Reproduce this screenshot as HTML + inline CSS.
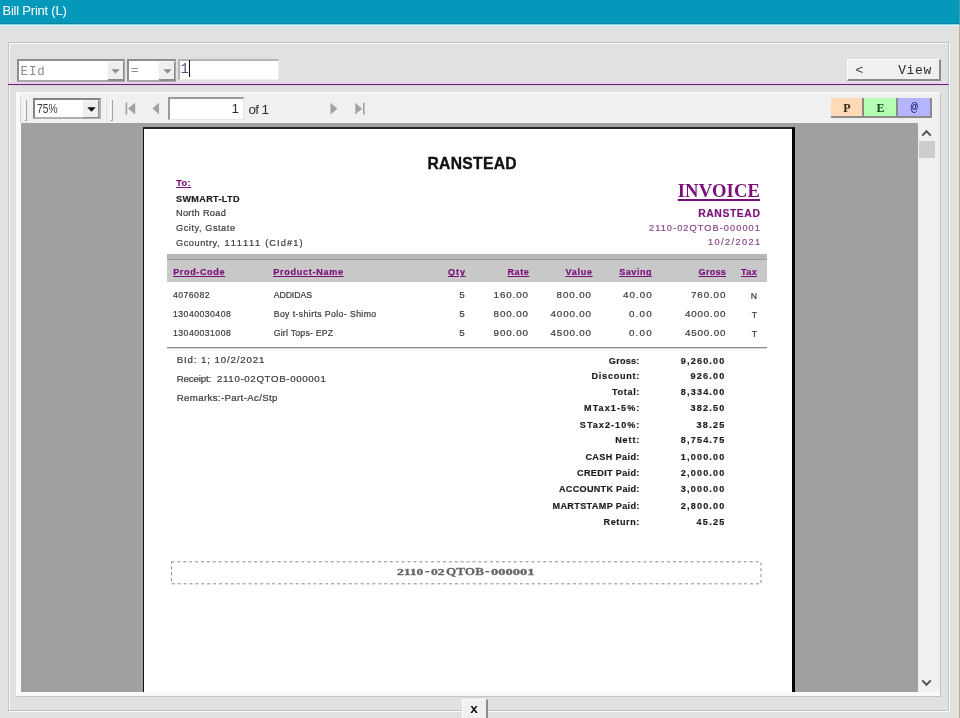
<!DOCTYPE html>
<html>
<head>
<meta charset="utf-8">
<title>Bill Print (L)</title>
<style>
html,body{margin:0;padding:0;}
body{width:960px;height:718px;overflow:hidden;position:relative;background:#e1e1e1;font-family:"Liberation Sans",sans-serif;}
div,span,svg{position:absolute;box-sizing:border-box;}
.t{white-space:pre;line-height:1;}
.title{font-family:"Liberation Sans", sans-serif;font-size:13px;font-weight:normal;color:#ffffff;}
.h1{font-family:"Liberation Sans", sans-serif;font-size:15.7px;font-weight:bold;color:#111;-webkit-text-stroke:0.35px currentColor;}
.to{font-family:"Liberation Sans", sans-serif;font-size:9.2px;font-weight:bold;color:#7a0f7a;text-decoration:underline;text-decoration-thickness:1px;text-underline-offset:1px;-webkit-text-stroke:0.18px currentColor;}
.b{font-family:"Liberation Sans", sans-serif;font-size:9.1px;font-weight:bold;color:#1c1c1c;-webkit-text-stroke:0.18px currentColor;}
.n{font-family:"Liberation Sans", sans-serif;font-size:9.2px;font-weight:normal;color:#3c3c3c;-webkit-text-stroke:0.22px currentColor;}
.rt{font-family:"Liberation Sans", sans-serif;font-size:8.7px;font-weight:normal;color:#3c3c3c;-webkit-text-stroke:0.22px currentColor;}
.rn{font-family:"Liberation Sans", sans-serif;font-size:9.8px;font-weight:normal;color:#3c3c3c;-webkit-text-stroke:0.22px currentColor;}
.inf{font-family:"Liberation Sans", sans-serif;font-size:9.7px;font-weight:normal;color:#3c3c3c;-webkit-text-stroke:0.22px currentColor;}
.inv{font-family:"Liberation Serif", serif;font-size:18.6px;font-weight:bold;color:#7a0f7a;text-decoration:underline;text-decoration-thickness:1.6px;text-underline-offset:2.2px;}
.pb{font-family:"Liberation Sans", sans-serif;font-size:10.4px;font-weight:bold;color:#7a0f7a;-webkit-text-stroke:0.18px currentColor;}
.pn{font-family:"Liberation Sans", sans-serif;font-size:9.2px;font-weight:normal;color:#8c4a8c;-webkit-text-stroke:0.22px currentColor;}
.hd{font-family:"Liberation Sans", sans-serif;font-size:9.1px;font-weight:bold;color:#7a0f7a;text-decoration:underline;text-decoration-thickness:1px;text-underline-offset:1px;-webkit-text-stroke:0.18px currentColor;}
.geo{font-family:"Liberation Serif", serif;font-size:11.5px;font-weight:bold;color:#666;-webkit-text-stroke:0.3px currentColor;}
.mono{font-family:"Liberation Mono",monospace;white-space:pre;line-height:1;}
/* title */
#tb{left:0;top:0;width:960px;height:23px;background:#0499bb;}
#tb1{left:0;top:23px;width:960px;height:1px;background:#0c819d;}
#tb2{left:0;top:24px;width:960px;height:1px;background:#86d3df;}
#tb3{left:0;top:25px;width:960px;height:1px;background:#ccfdff;}
#rstrip{left:958px;top:26px;width:1px;height:692px;background:#ede3db;}
#rstrip2{left:959px;top:0;width:1px;height:718px;background:#b9ab9e;}
#rstrip3{left:959px;top:0;width:1px;height:24px;background:#3f9fb2;}
/* group box */
#gb{left:8px;top:42px;width:941px;height:669px;border:1px solid #c2c2c2;box-shadow:1px 1px 0 #fbfbfb, inset 1px 1px 0 #fbfbfb;}
/* combos */
.cb{background:#fff;border:2px solid #8e8e8e;border-right-color:#a8a8a8;border-bottom-color:#a8a8a8;}
.cbtn{background:#efefef;border-right:1px solid #8a8a8a;border-bottom:2px solid #8a8a8a;border-left:1px solid #fafafa;border-top:1px solid #fafafa;}
#plm{left:9px;top:82px;width:939px;height:1px;background:#e9dbe9;}
#pl0{left:8px;top:83px;width:941px;height:1px;background:#efc9ef;}
#pl1{left:8px;top:84px;width:941px;height:1px;background:#5b2f63;}
#pl2{left:8px;top:85px;width:941px;height:1px;background:#eaccea;}
#pl3{left:9px;top:86px;width:939px;height:1px;background:#e5dde5;}
/* raised button */
.btn{background:#f0f0f0;border-top:1px solid #fdfdfd;border-left:1px solid #fdfdfd;border-right:2px solid #8c8c8c;border-bottom:2px solid #8c8c8c;}
/* viewer */
#vp{left:16px;top:92px;width:925px;height:605px;background:#f0f0f0;border-top:1px solid #fafafa;border-left:1px solid #fafafa;border-right:1px solid #c4c4c4;border-bottom:1px solid #c4c4c4;}
#ga{left:21px;top:123px;width:897px;height:569px;background:#a0a0a0;overflow:hidden;}
#page{left:122px;top:4px;width:652px;height:800px;background:#fff;border:1px solid #111;border-right:3px solid #000;border-top:2px solid #222;}
#sb{left:918px;top:123px;width:22px;height:569px;background:#f0f0f0;}
#th{left:919px;top:141px;width:16px;height:17px;background:#cdcdcd;}
.grip{width:3px;border-left:1px solid #fcfcfc;border-right:1px solid #a6a6a6;border-bottom:1px solid #a6a6a6;background:#ececec;}
</style>
</head>
<body>
<div id="root" style="left:0;top:0;width:960px;height:718px;will-change:transform;">
<!-- title bar -->
<div id="tb"></div><div id="tb1"></div><div id="tb2"></div><div id="tb3"></div>
<div class="t title" style="left:2.5px;top:4px;letter-spacing:-0.22px;">Bill Print (L)</div>
<div id="rstrip"></div><div id="rstrip2"></div><div id="rstrip3"></div>

<!-- group box -->
<div id="gb"></div>

<!-- filter row -->
<div class="cb" style="left:17px;top:59px;width:108px;height:23px;"></div>
<div class="cbtn" style="left:107px;top:61px;width:17px;height:20px;"></div>
<svg style="left:111px;top:69px;" width="9" height="5" viewBox="0 0 9 5"><path d="M0.3 0.3 L8.7 0.3 L4.5 4.6 Z" fill="#8c8c8c"/></svg>
<div class="mono" style="left:20.6px;top:66px;font-size:12.4px;letter-spacing:0.95px;color:#8a8a8a;">EId</div>

<div class="cb" style="left:127px;top:59px;width:49px;height:23px;"></div>
<div class="cbtn" style="left:158px;top:61px;width:17px;height:20px;"></div>
<svg style="left:163px;top:69px;" width="9" height="5" viewBox="0 0 9 5"><path d="M0.3 0.3 L8.7 0.3 L4.5 4.6 Z" fill="#8c8c8c"/></svg>
<div class="mono" style="left:130.7px;top:64px;font-size:13px;color:#8a8a8a;">=</div>

<div style="left:178px;top:59px;width:101px;height:21px;background:#fff;border-top:2px solid #b4b4b4;border-left:2px solid #b4b4b4;border-right:1px solid #ececec;border-bottom:1px solid #ececec;"></div>
<div class="mono" style="left:180.5px;top:62.2px;font-size:14px;color:#47557d;">1</div>
<div style="left:188.5px;top:60px;width:1.5px;height:17px;background:#111;"></div>

<div id="plm"></div><div id="pl0"></div><div id="pl1"></div><div id="pl2"></div><div id="pl3"></div>

<!-- View button -->
<div class="btn" style="left:847px;top:59px;width:94px;height:22px;"></div>
<div class="mono" style="left:855.4px;top:63.6px;font-size:13px;color:#3a3a3a;">&lt;</div>
<div class="mono" style="left:898.2px;top:63.6px;font-size:13px;letter-spacing:0.6px;color:#2c2c2c;">View</div>

<!-- viewer panel -->
<div id="vp"></div>
<div id="ga">
  <div id="page"></div>
</div>
<div style="left:17px;top:93px;width:4px;height:603px;background:#f9f9f9;"></div><div style="left:17px;top:692px;width:923px;height:4px;background:#f9f9f9;"></div>
<div id="sb"></div><div id="th"></div>
<svg style="left:921px;top:129px;" width="11" height="8" viewBox="0 0 11 8"><path d="M1.2 6.6 L5.5 2.2 L9.8 6.6" fill="none" stroke="#555" stroke-width="2"/></svg>
<svg style="left:921px;top:679px;" width="11" height="8" viewBox="0 0 11 8"><path d="M1.2 1.4 L5.5 5.8 L9.8 1.4" fill="none" stroke="#555" stroke-width="2"/></svg>

<!-- toolbar -->
<div style="left:20px;top:97px;width:1px;height:26px;background:#d2d2d2;"></div>
<div class="grip" style="left:24px;top:100px;height:21px;"></div>
<div style="left:33px;top:98px;width:68px;height:21px;background:#fff;border:2px solid #858585;border-right-color:#b0b0b0;border-bottom-color:#b0b0b0;"></div>
<div class="cbtn" style="left:82px;top:100px;width:17px;height:18px;border-bottom-width:1px;"></div>
<svg style="left:87px;top:107px;" width="9" height="5" viewBox="0 0 9 5"><path d="M0.2 0.2 L8.8 0.2 L4.5 4.8 Z" fill="#111"/></svg>
<div class="t" style="left:37px;top:101.9px;font-size:13px;color:#3a3a3a;transform:scaleX(0.79);transform-origin:0 0;">75%</div>
<div style="left:105px;top:96px;width:1px;height:26px;background:#fbfbfb;"></div>
<div style="left:106px;top:96px;width:1px;height:26px;background:#e2e2e2;"></div>
<div class="grip" style="left:110px;top:100px;height:21px;"></div>

<svg style="left:125px;top:102px;" width="11" height="13" viewBox="0 0 11 13"><rect x="0.6" y="0.5" width="1.6" height="12" fill="#a2a2a2"/><path d="M10.2 0.5 L10.2 12.5 L3 6.5 Z" fill="#a2a2a2"/></svg>
<svg style="left:152px;top:102px;" width="8" height="13" viewBox="0 0 8 13"><path d="M7 0.5 L7 12.5 L0.5 6.5 Z" fill="#a2a2a2"/></svg>

<div style="left:168px;top:97px;width:76px;height:23px;background:#fff;border-top:2px solid #9a9a9a;border-left:2px solid #9a9a9a;border-right:1px solid #e4e4e4;border-bottom:1px solid #e4e4e4;"></div>
<div class="t" style="left:231.5px;top:102.4px;font-size:13.5px;color:#2e2e2e;">1</div>
<div class="t" style="left:248.5px;top:102.6px;font-size:13.5px;color:#2e2e2e;letter-spacing:-0.7px;">of 1</div>

<svg style="left:330px;top:102px;" width="8" height="13" viewBox="0 0 8 13"><path d="M0.5 0.8 L0.5 12.6 L7.4 6.7 Z" fill="#a2a2a2"/></svg>
<svg style="left:355px;top:102px;" width="11" height="13" viewBox="0 0 11 13"><path d="M0.3 0.8 L0.3 12.6 L7.2 6.7 Z" fill="#a2a2a2"/><rect x="8" y="0.8" width="1.6" height="11.8" fill="#a2a2a2"/></svg>

<!-- P E @ -->
<div style="left:831px;top:98px;width:33px;height:20px;background:#ffdab9;border-right:2px solid #8a8a8a;border-bottom:2px solid #8a8a8a;"></div>
<div style="left:864px;top:98px;width:34px;height:20px;background:#b4ffb4;border-right:2px solid #8a8a8a;border-bottom:2px solid #8a8a8a;"></div>
<div style="left:898px;top:98px;width:34px;height:20px;background:#b4b4ff;border-right:2px solid #8a8a8a;border-bottom:2px solid #8a8a8a;"></div>
<div class="t" style="left:843.2px;top:102.4px;font-family:'Liberation Serif',serif;font-size:12px;font-weight:bold;color:#33200f;">P</div>
<div class="t" style="left:876.4px;top:102.4px;font-family:'Liberation Serif',serif;font-size:12px;font-weight:bold;color:#15481a;">E</div>
<div class="mono" style="left:910.6px;top:101.6px;font-size:12.6px;font-weight:bold;color:#2b2b7d;">@</div>

<!-- document content (absolute in page coordinates of body) -->
<div style="left:0;top:123px;width:918px;height:568px;overflow:hidden;">
 <div style="left:0;top:-123px;width:960px;height:900px;">
  <div style="left:167px;top:254px;width:600px;height:28px;background:#c8c8c8;"></div>
  <div style="left:167px;top:254px;width:600px;height:5px;background:#b8b8b8;"></div>
  <div style="left:167px;top:259px;width:600px;height:1px;background:#9a9a9a;"></div>
  <div style="left:167px;top:347px;width:600px;height:1px;background:#8a8a8a;"></div><div style="left:167px;top:348px;width:600px;height:1px;background:#dcdcdc;"></div>
  <svg style="left:170px;top:560px;" width="593" height="26" viewBox="0 0 593 26"><rect x="1.5" y="1.8" width="589.5" height="22" fill="none" stroke="#8a8a8a" stroke-width="1" stroke-dasharray="3 2.9"/></svg>
<div class="t h1" style="left:427.50px;top:155.51px;letter-spacing:0.292px;">RANSTEAD</div>
<div class="t to" style="left:176.20px;top:179.41px;letter-spacing:0.445px;">To:</div>
<div class="t b" style="left:176.00px;top:194.70px;letter-spacing:0.339px;">SWMART-LTD</div>
<div class="t n" style="left:176.00px;top:209.21px;letter-spacing:0.313px;">North Road</div>
<div class="t n" style="left:176.00px;top:224.21px;letter-spacing:0.548px;">Gcity, Gstate</div>
<div class="t n" style="left:176.00px;top:238.81px;letter-spacing:0.555px;">Gcountry,</div>
<div class="t n" style="left:224.60px;top:238.81px;letter-spacing:1.670px;">111111</div>
<div class="t n" style="left:265.20px;top:238.81px;letter-spacing:1.110px;">(CId#1)</div>
<div class="t inv" style="left:677.70px;top:181.72px;letter-spacing:0.158px;">INVOICE</div>
<div class="t pb" style="left:698.20px;top:209.30px;letter-spacing:0.567px;">RANSTEAD</div>
<div class="t pn" style="left:649.00px;top:223.81px;letter-spacing:1.075px;">2110-02QTOB-000001</div>
<div class="t pn" style="left:708.00px;top:237.81px;letter-spacing:1.391px;">10/2/2021</div>
<div class="t hd" style="left:173.20px;top:268.30px;letter-spacing:0.602px;">Prod-Code</div>
<div class="t hd" style="left:273.20px;top:268.30px;letter-spacing:0.695px;">Product-Name</div>
<div class="t hd" style="left:448.00px;top:268.30px;letter-spacing:0.914px;">Qty</div>
<div class="t hd" style="left:507.50px;top:268.30px;letter-spacing:0.527px;">Rate</div>
<div class="t hd" style="left:565.50px;top:268.30px;letter-spacing:0.684px;">Value</div>
<div class="t hd" style="left:619.20px;top:268.30px;letter-spacing:0.514px;">Saving</div>
<div class="t hd" style="left:698.60px;top:268.30px;letter-spacing:0.226px;">Gross</div>
<div class="t hd" style="left:741.00px;top:268.30px;letter-spacing:0.350px;">Tax</div>
<div class="t rt" style="left:173.00px;top:290.64px;letter-spacing:0.445px;">4076082</div>
<div class="t rt" style="left:273.70px;top:290.64px;letter-spacing:-0.054px;">ADDIDAS</div>
<div class="t rn" style="left:459.15px;top:290.30px;letter-spacing:0.800px;">5</div>
<div class="t rn" style="left:493.60px;top:289.70px;letter-spacing:0.886px;">160.00</div>
<div class="t rn" style="left:556.60px;top:289.70px;letter-spacing:0.886px;">800.00</div>
<div class="t rn" style="left:623.00px;top:289.70px;letter-spacing:1.017px;">40.00</div>
<div class="t rn" style="left:691.00px;top:289.70px;letter-spacing:0.886px;">760.00</div>
<div class="t rt" style="left:750.72px;top:291.64px;letter-spacing:0.400px;">N</div>
<div class="t rt" style="left:173.00px;top:309.64px;letter-spacing:0.464px;">13040030408</div>
<div class="t rt" style="left:273.70px;top:309.64px;letter-spacing:0.405px;">Boy t-shirts Polo- Shimo</div>
<div class="t rn" style="left:459.15px;top:309.30px;letter-spacing:0.800px;">5</div>
<div class="t rn" style="left:493.60px;top:308.70px;letter-spacing:0.886px;">800.00</div>
<div class="t rn" style="left:550.60px;top:308.70px;letter-spacing:0.830px;">4000.00</div>
<div class="t rn" style="left:629.00px;top:308.70px;letter-spacing:1.174px;">0.00</div>
<div class="t rn" style="left:685.00px;top:308.70px;letter-spacing:0.830px;">4000.00</div>
<div class="t rt" style="left:751.69px;top:310.64px;letter-spacing:0.400px;">T</div>
<div class="t rt" style="left:173.00px;top:328.64px;letter-spacing:0.464px;">13040031008</div>
<div class="t rt" style="left:273.70px;top:328.64px;letter-spacing:0.244px;">Girl Tops- EPZ</div>
<div class="t rn" style="left:459.15px;top:328.30px;letter-spacing:0.800px;">5</div>
<div class="t rn" style="left:493.60px;top:327.70px;letter-spacing:0.886px;">900.00</div>
<div class="t rn" style="left:550.60px;top:327.70px;letter-spacing:0.830px;">4500.00</div>
<div class="t rn" style="left:629.00px;top:327.70px;letter-spacing:1.174px;">0.00</div>
<div class="t rn" style="left:685.00px;top:327.70px;letter-spacing:0.830px;">4500.00</div>
<div class="t rt" style="left:751.69px;top:329.64px;letter-spacing:0.400px;">T</div>
<div class="t inf" style="left:176.70px;top:355.29px;letter-spacing:0.875px;">BId: 1; 10/2/2021</div>
<div class="t inf" style="left:176.70px;top:374.29px;letter-spacing:-0.135px;">Receipt:</div>
<div class="t inf" style="left:217.00px;top:374.29px;letter-spacing:0.655px;">2110-02QTOB-000001</div>
<div class="t inf" style="left:176.70px;top:393.09px;letter-spacing:0.347px;">Remarks:-Part-Ac/Stp</div>
<div class="t b" style="left:608.80px;top:356.50px;letter-spacing:0.258px;">Gross:</div>
<div class="t b" style="left:680.70px;top:356.50px;letter-spacing:1.185px;">9,260.00</div>
<div class="t b" style="left:591.50px;top:372.30px;letter-spacing:0.745px;">Discount:</div>
<div class="t b" style="left:690.40px;top:372.30px;letter-spacing:1.234px;">926.00</div>
<div class="t b" style="left:611.90px;top:387.90px;letter-spacing:0.684px;">Total:</div>
<div class="t b" style="left:680.70px;top:387.90px;letter-spacing:1.185px;">8,334.00</div>
<div class="t b" style="left:584.00px;top:403.80px;letter-spacing:1.071px;">MTax1-5%:</div>
<div class="t b" style="left:690.40px;top:403.80px;letter-spacing:1.234px;">382.50</div>
<div class="t b" style="left:579.80px;top:420.50px;letter-spacing:1.025px;">STax2-10%:</div>
<div class="t b" style="left:696.50px;top:420.50px;letter-spacing:1.284px;">38.25</div>
<div class="t b" style="left:615.20px;top:436.40px;letter-spacing:0.870px;">Nett:</div>
<div class="t b" style="left:680.70px;top:436.40px;letter-spacing:1.185px;">8,754.75</div>
<div class="t b" style="left:585.40px;top:452.60px;letter-spacing:0.385px;">CASH Paid:</div>
<div class="t b" style="left:680.70px;top:452.60px;letter-spacing:1.185px;">1,000.00</div>
<div class="t b" style="left:577.00px;top:468.80px;letter-spacing:0.345px;">CREDIT Paid:</div>
<div class="t b" style="left:680.70px;top:468.80px;letter-spacing:1.185px;">2,000.00</div>
<div class="t b" style="left:559.00px;top:485.40px;letter-spacing:0.277px;">ACCOUNTK Paid:</div>
<div class="t b" style="left:680.70px;top:485.40px;letter-spacing:1.185px;">3,000.00</div>
<div class="t b" style="left:552.50px;top:501.60px;letter-spacing:0.349px;">MARTSTAMP Paid:</div>
<div class="t b" style="left:680.70px;top:501.60px;letter-spacing:1.185px;">2,800.00</div>
<div class="t b" style="left:603.50px;top:517.50px;letter-spacing:0.593px;">Return:</div>
<div class="t b" style="left:696.50px;top:517.50px;letter-spacing:1.284px;">45.25</div>
<div class="t geo" style="left:397.30px;top:568.05px;font-size:8.9px;transform:scaleX(1.529);transform-origin:0 0;">2110</div>
<div class="t geo" style="left:425.20px;top:565.45px;font-size:12px;transform:scaleX(1.150);transform-origin:0 0;">-</div>
<div class="t geo" style="left:431.20px;top:568.05px;font-size:8.9px;transform:scaleX(1.532);transform-origin:0 0;">02</div>
<div class="t geo" style="left:445.60px;top:565.95px;font-size:11.4px;transform:scaleX(1.161);transform-origin:0 0;">QTOB</div>
<div class="t geo" style="left:484.80px;top:565.45px;font-size:12px;transform:scaleX(1.150);transform-origin:0 0;">-</div>
<div class="t geo" style="left:491.20px;top:568.05px;font-size:8.9px;transform:scaleX(1.638);transform-origin:0 0;">000001</div>
 </div>
</div>

<!-- x button -->
<div class="btn" style="left:462px;top:699px;width:26px;height:24px;"></div>
<div class="mono" style="left:470px;top:703px;font-size:13.5px;font-weight:bold;color:#111;">x</div>
</div>
</body>
</html>
